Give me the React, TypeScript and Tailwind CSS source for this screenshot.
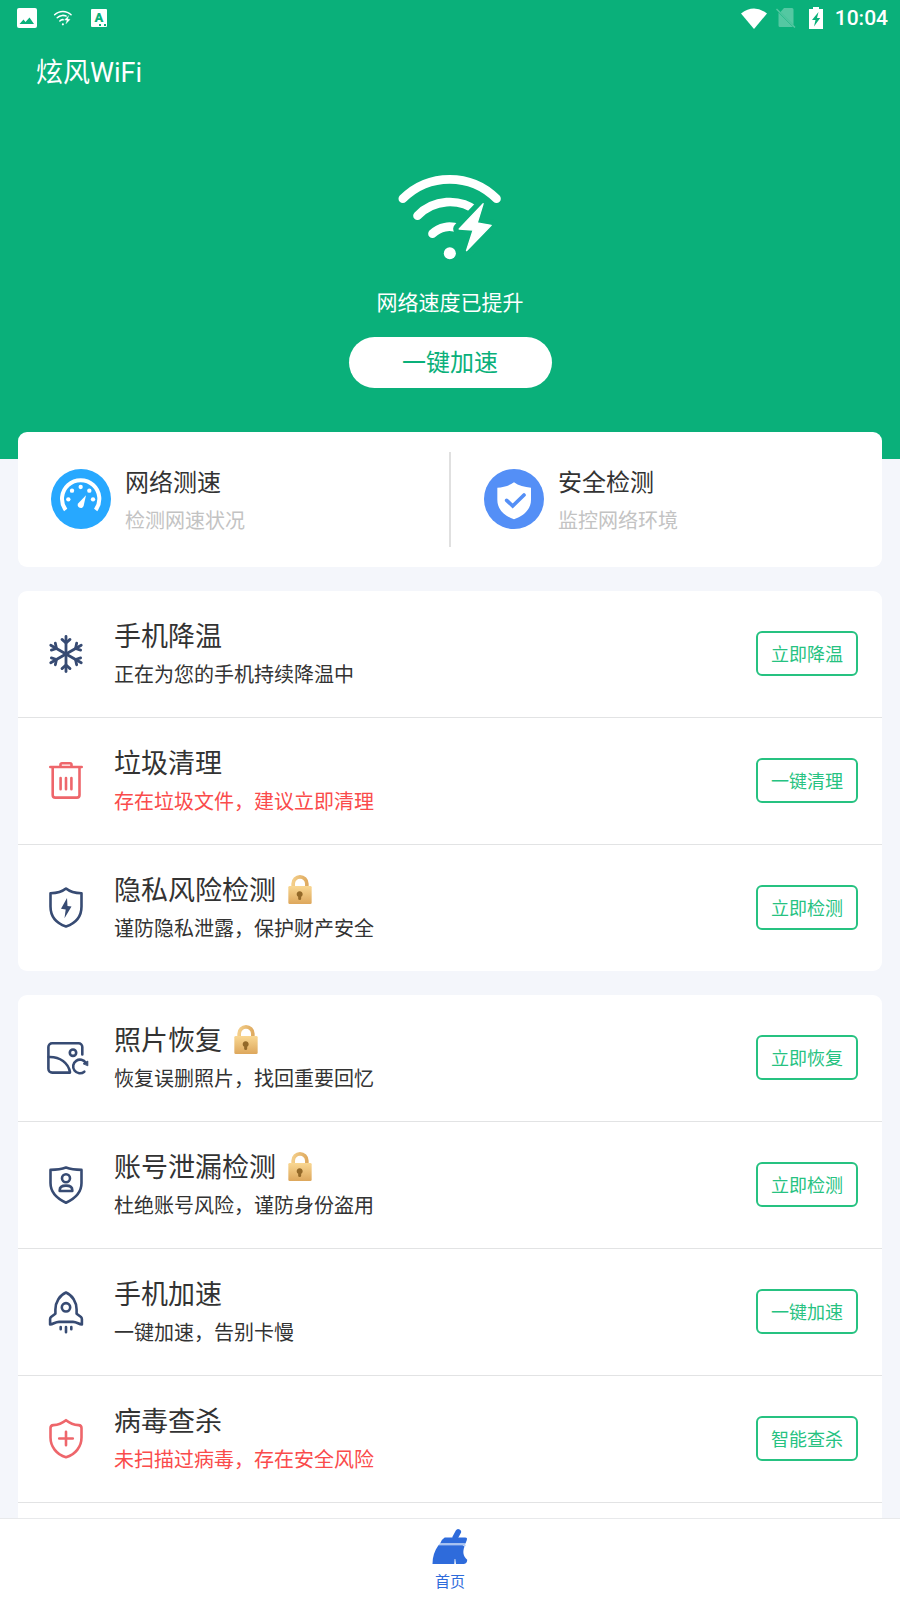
import type { ReactNode } from 'react';

const NAVY = '#374b73';
const RED = '#ee666b';

type Feature = {
  title: string;
  desc: string;
  action: string;
  icon: ReactNode;
  locked?: boolean;
  warn?: boolean;
};

function LineIcon({ color = NAVY, children }: { color?: string; children: ReactNode }) {
  return (
    <svg
      viewBox="0 -1 44 45"
      className="w-11 h-[45px] shrink-0 overflow-visible"
      fill="none"
      stroke={color}
      strokeWidth="2.6"
      strokeLinecap="round"
      strokeLinejoin="round"
      aria-hidden="true"
    >
      {children}
    </svg>
  );
}

function SnowIcon() {
  return (
    <LineIcon>
      {[0, 60, 120, 180, 240, 300].map((deg) => (
        <g key={deg} transform={`rotate(${deg} 22 22)`} strokeWidth="2.8">
          <path d="M22 22V4.400" />
          <path d="M18 7.400 22 11l4-3.600" />
        </g>
      ))}
    </LineIcon>
  );
}

function TrashIcon() {
  return (
    <LineIcon color={RED}>
      <path d="M6.300 8h31.400M16.500 7.500V5.600a1.400 1.400 0 0 1 1.400-1.400h8.200a1.400 1.400 0 0 1 1.400 1.400v1.900" />
      <path d="M8.700 8.500v27.500a2.600 2.600 0 0 0 2.600 2.600h21.600a2.600 2.600 0 0 0 2.600-2.600V8.500" />
      <path d="M16.600 19v11.300M22 19v11.300M27.400 19v11.300" />
    </LineIcon>
  );
}

function ShieldBoltIcon() {
  return (
    <LineIcon>
      <path d="M22 2.500c3.500 2.900 9 4.600 15.500 4.800v13.200c0 9-5.200 16.500-15.500 20-10.300-3.500-15.500-11-15.500-20V7.300C13 7.100 18.500 5.400 22 2.500Z" />
      <path d="M23 12 17 22.800l4.700.6L20.500 32.300l7-11.700-4-.5Z" fill={NAVY} stroke="none" />
    </LineIcon>
  );
}

function PhotoIcon() {
  return (
    <LineIcon>
      <path d="M38.300 18.500V11a3.800 3.800 0 0 0-3.800-3.800H8.200A3.800 3.800 0 0 0 4.400 11v21.800a3.800 3.800 0 0 0 3.800 3.800h17.600" />
      <path d="M4.700 21C16 20.500 24.500 27 26 36.300" />
      <circle cx="29" cy="16.700" r="3.200" />
      <path d="M40.300 35.700a6.800 6.800 0 1 1 1.500-8.700" />
      <path d="M39.500 27.600l4.300-2.500v4.300Z" fill={NAVY} strokeWidth="1" />
    </LineIcon>
  );
}

function AccountIcon() {
  return (
    <LineIcon>
      <path d="M22 4.500c4.600 1.700 9.700 2.300 15.500 2.400V20c0 9.300-5.900 15.300-15.500 19.700C12.400 35.300 6.500 29.300 6.500 20V6.900C12.300 6.800 17.400 6.200 22 4.500Z" />
      <circle cx="22" cy="15.300" r="4" />
      <path d="M15.700 28v-.8c0-3 2.200-4.600 6.300-4.600s6.300 1.600 6.300 4.600v.8Z" />
    </LineIcon>
  );
}

function RocketIcon() {
  return (
    <LineIcon>
      <path d="M22 2.500C15.700 5.200 11.400 12 11.400 19.500v4.200L7 27c-.8.700-.9 1.400-.9 2.300v5.200c3.200-.2 5-2.600 8.900-2.600h14c3.900 0 5.700 2.400 8.900 2.600v-5.200c0-.9-.1-1.600-.9-2.300l-4.400-3.300v-4.200C32.600 12 28.300 5.200 22 2.500Z" />
      <circle cx="22" cy="17.300" r="4.200" />
      <path d="M16.700 37v2.200M22 37v5.300M27.300 37v2.200" />
    </LineIcon>
  );
}

function VirusIcon() {
  return (
    <LineIcon color={RED}>
      <path d="M22 3.200c3.500 2.800 8 4.600 12.600 4.900 2 .1 2.900 1 2.900 3v9.400c0 8.900-5.700 16.800-15.500 19.800-9.800-3-15.500-10.900-15.500-19.800v-9.400c0-2 .9-2.900 2.900-3C14 7.800 18.500 6 22 3.200Z" />
      <path d="M15.200 21.500h13.600M22 14.700v13.600" />
    </LineIcon>
  );
}

function WifiBolt({ className }: { className: string }) {
  const bolt = 'M458 162 440 220 482 227 408 303 428 241 386 238Z';
  return (
    <svg viewBox="206 73 308 258" className={`${className} overflow-visible`} fill="none" strokeLinecap="round" aria-hidden="true">
      <g stroke="#fff" strokeWidth="26">
        <path d="M217 147A199 199 0 0 1 498 147" />
        <path d="M261 198A135 135 0 0 1 440 185" />
        <path d="M306 252A72 72 0 0 1 385 237" />
      </g>
      <path d={bolt} fill="#0ab07a" stroke="#0ab07a" strokeWidth="36" strokeLinejoin="round" />
      <path d={bolt} fill="#fff" stroke="#fff" strokeWidth="4" strokeLinejoin="round" />
      <circle cx="358" cy="311" r="18" fill="#fff" />
    </svg>
  );
}

function GaugeIcon() {
  return (
    <svg viewBox="0 0 180 180" className="w-[60px] h-[60px] shrink-0" aria-hidden="true">
      <circle cx="90" cy="90" r="90" fill="#27a8ff" />
      <path d="M44 123A56 56 0 1 1 134 123" fill="none" stroke="#fff" strokeWidth="12" />
      <g fill="#fff">
        <circle cx="52" cy="91" r="6.500" />
        <circle cx="63" cy="65" r="6.500" />
        <circle cx="89" cy="54" r="6.500" />
        <circle cx="115" cy="65" r="6.500" />
        <circle cx="126" cy="91" r="6.500" />
        <path d="M105 79 98 110C96 116 91 118 86 116.500C80 114 78 108 82 103Z" />
      </g>
    </svg>
  );
}

function SafeIcon() {
  return (
    <svg viewBox="0 0 180 180" className="w-[60px] h-[60px] shrink-0" aria-hidden="true">
      <circle cx="90" cy="90" r="90" fill="#548ff6" />
      <path d="M90 40C103 50 122 55 141 56V92C141 121 120 140 90 151C60 140 40 121 40 92V56C58 55 77 50 90 40Z" fill="#fff" />
      <path d="M68 94 86 111 120 78" fill="none" stroke="#548ff6" strokeWidth="11" strokeLinecap="round" />
    </svg>
  );
}

function LockIcon() {
  return (
    <svg viewBox="0 0 72 87" className="w-6 h-[29px] mb-1" role="img" aria-label="已锁定">
      <defs>
        <linearGradient id="lock-body" x1="0" y1="0" x2="0" y2="1">
          <stop offset="0" stopColor="#f9d792" />
          <stop offset="1" stopColor="#dda75c" />
        </linearGradient>
        <linearGradient id="lock-bar" x1="0" y1="0" x2="1" y2="0">
          <stop offset="0" stopColor="#f3cd88" />
          <stop offset="1" stopColor="#dfab61" />
        </linearGradient>
      </defs>
      <path d="M15.500 36V26a20.500 20.500 0 0 1 41 0V36" fill="none" stroke="url(#lock-bar)" strokeWidth="11" />
      <rect x="1" y="33" width="70" height="54" rx="4" fill="url(#lock-body)" />
      <path d="M30.500 65.500a9 9 0 1 1 9 0V71q0 4-4.500 4t-4.500-4Z" fill="#936929" />
    </svg>
  );
}

function BroomIcon() {
  return (
    <svg viewBox="155 116 108 106" className="w-9 h-[35px]" aria-hidden="true">
      <path d="M225 141 234 125" stroke="#2e6bdb" strokeWidth="17" strokeLinecap="round" />
      <path d="M193 142H255Q262 142 260 149L256 160H179Q184 147 193 142Z" fill="#2e6bdb" />
      <path d="M179 159H250L256 164V168L248 165H174Z" fill="#a9c3f1" />
      <path d="M174 165H247L253 169C247 184 248 198 261 209Q262 219 251 222H227L225 207H223L222 222H156C156 200 162 182 174 165Z" fill="#2e6bdb" />
    </svg>
  );
}

function StatusBar() {
  return (
    <div className="h-9 flex items-center justify-between pl-[17px] pr-3">
      <div className="flex items-center">
        <svg viewBox="0 0 20 20" className="w-5 h-5" aria-hidden="true">
          <rect width="20" height="20" rx="2" fill="#fff" />
          <path d="M2.500 16 6.500 11.500 8.500 14 12.500 9.500 17 16Z" fill="#0ab07a" />
        </svg>
        <WifiBolt className="w-[18px] h-4 ml-[17px]" />
        <span className="ml-[19px] w-4 h-[18px] rounded-[1px] bg-white flex justify-center text-[13px] leading-[17px] font-black text-[#0ab07a] relative">
          A
          <span className="absolute right-px bottom-px w-[7px] border-b-2 border-dotted border-[#0ab07a]" />
        </span>
      </div>
      <div className="flex items-center">
        <svg viewBox="0 0 26 21" className="w-[26px] h-[21px]" aria-hidden="true">
          <path d="M0 5.500Q13-4.500 26 5.500L13 21Z" fill="#fff" />
        </svg>
        <svg viewBox="0 0 20 20" className="w-5 h-5 ml-[9px] opacity-30" aria-hidden="true">
          <path d="M8 0H16a1.500 1.500 0 0 1 1.500 1.500V17L4.500 4ZM2.500 4.500 17 19H4a1.500 1.500 0 0 1-1.500-1.500Z" fill="#fff" />
          <path d="M.5 1 19 19.500" stroke="#fff" strokeWidth="1.500" />
        </svg>
        <svg viewBox="0 0 14 22" className="w-3.5 h-[22px] ml-[13px]" aria-hidden="true">
          <path d="M4 0h6v2h4v20H0V2h4Z" fill="#fff" />
          <path d="M9.500 5 3 13h3.500l-1.500 6.500L11.200 11H8Z" fill="#0ab07a" />
        </svg>
        <span className="ml-3 text-[21px] leading-9 font-medium">10:04</span>
      </div>
    </div>
  );
}

function ToolTile({ icon, title, desc }: { icon: ReactNode; title: string; desc: string }) {
  return (
    <button className="flex-1 flex items-center gap-3.5 pl-[33px] pb-px text-left">
      {icon}
      <span className="flex flex-col">
        <span className="text-[24px] leading-[44px] text-[#333]">{title}</span>
        <span className="text-[20px] leading-[32px] text-[#c3c3c3]">{desc}</span>
      </span>
    </button>
  );
}

function FeatureRow({ item }: { item: Feature }) {
  return (
    <li className="flex items-center gap-[26px] pl-[26px] pr-6 pt-[25px] pb-[26px] border-b border-[#e2e3e4] last:border-b-0">
      {item.icon}
      <div className="flex-1 min-w-0">
        <h2 className="flex items-center gap-3 text-[27px] leading-[43px] text-[#333]">
          {item.title}
          {item.locked && <LockIcon />}
        </h2>
        <p className={item.warn ? 'text-[20px] leading-[32px] text-[#fa4b4b]' : 'text-[20px] leading-[32px] text-[#333]'}>
          {item.desc}
        </p>
      </div>
      <button className="h-[45px] w-[102px] shrink-0 rounded-md border-2 border-[#26c281] pt-px text-[18px] text-[#26c281]">
        {item.action}
      </button>
    </li>
  );
}

const protect: Feature[] = [
  { title: '手机降温', desc: '正在为您的手机持续降温中', action: '立即降温', icon: <SnowIcon /> },
  { title: '垃圾清理', desc: '存在垃圾文件，建议立即清理', action: '一键清理', icon: <TrashIcon />, warn: true },
  { title: '隐私风险检测', desc: '谨防隐私泄露，保护财产安全', action: '立即检测', icon: <ShieldBoltIcon />, locked: true },
];

const tools: Feature[] = [
  { title: '照片恢复', desc: '恢复误删照片，找回重要回忆', action: '立即恢复', icon: <PhotoIcon />, locked: true },
  { title: '账号泄漏检测', desc: '杜绝账号风险，谨防身份盗用', action: '立即检测', icon: <AccountIcon />, locked: true },
  { title: '手机加速', desc: '一键加速，告别卡慢', action: '一键加速', icon: <RocketIcon /> },
  { title: '病毒查杀', desc: '未扫描过病毒，存在安全风险', action: '智能查杀', icon: <VirusIcon />, warn: true },
];

export default function App() {
  return (
    <div
      lang="zh-CN"
      className="h-screen flex flex-col bg-[#f4f6fb] font-[Roboto,'Noto_Sans_CJK_SC',sans-serif]"
    >
      <main className="flex-1 min-h-0 overflow-y-auto [scrollbar-width:none]">
        <header className="bg-[#0ab07a] text-white pb-[71px]">
          <StatusBar />
          <h1 className="px-9 text-[27px] leading-[74px]">炫风WiFi</h1>
          <div className="flex flex-col items-center pt-16">
            <WifiBolt className="w-[103px] h-[86px]" />
            <p className="mt-7 text-[21px] leading-[30px]">网络速度已提升</p>
            <button className="mt-[19px] h-[51px] w-[203px] rounded-full bg-white text-[24px] text-[#0ab07a]">
              一键加速
            </button>
          </div>
        </header>

        <div className="px-[18px] -mt-[27px] flex flex-col gap-6">
          <section className="bg-white rounded-[9px] py-5 flex items-stretch">
            <ToolTile icon={<GaugeIcon />} title="网络测速" desc="检测网速状况" />
            <div className="w-0.5 h-[95px] bg-[#e0e0e0]" />
            <ToolTile icon={<SafeIcon />} title="安全检测" desc="监控网络环境" />
          </section>

          <ul className="bg-white rounded-[9px]">
            {protect.map((f) => <FeatureRow key={f.title} item={f} />)}
          </ul>

          <ul className="bg-white rounded-[9px]">
            {tools.map((f) => <FeatureRow key={f.title} item={f} />)}
            <li className="h-[126px]" />
          </ul>
        </div>
      </main>

      <nav className="shrink-0 bg-white border-t border-[#e8e9eb] flex justify-center">
        <a href="#home" className="flex flex-col items-center gap-1 pt-2.5 pb-1 text-[15px] leading-7 text-[#2e6bdb]">
          <BroomIcon />
          首页
        </a>
      </nav>
    </div>
  );
}
